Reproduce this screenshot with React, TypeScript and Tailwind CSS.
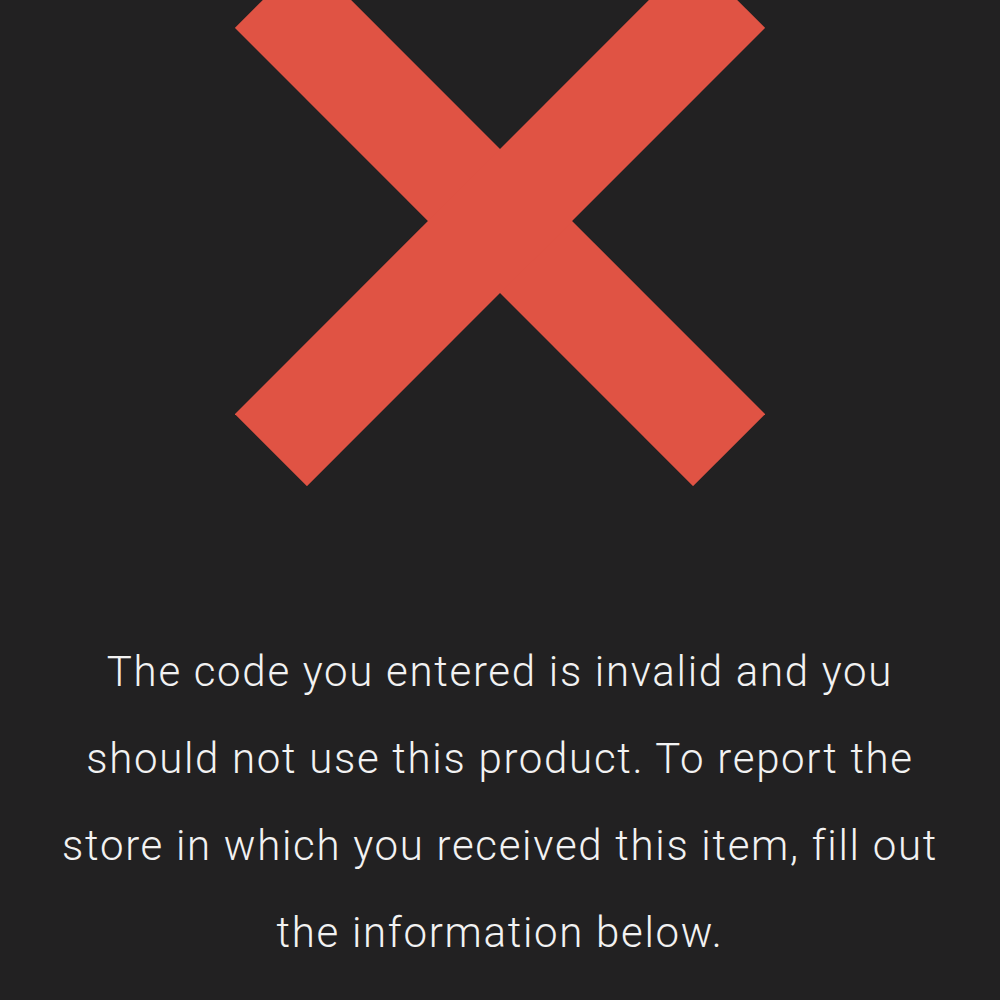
export default function App() {
  return (
    <div className="min-h-screen w-full overflow-hidden bg-[#222122] flex flex-col items-center">
      {/* error mark */}
      <svg width="530" height="530" viewBox="0 0 530 530" className="-mt-[44px] shrink-0">
        <rect x="-59" y="214" width="648" height="102" fill="#E05344" transform="rotate(45 265 265)" />
        <rect x="-59" y="214" width="648" height="102" fill="#E05344" transform="rotate(-45 265 265)" />
      </svg>

      <p
        className="mt-[142px] max-w-[900px] text-center text-[42px] leading-[87px] tracking-[1.7px] font-light text-[#f2f2f2]"
        style={{ fontFamily: 'Roboto, "Noto Sans", sans-serif' }}
      >
        The code you entered is invalid and you should not use this product. To report the store in which you received this item, fill out the information below.
      </p>
    </div>
  );
}
